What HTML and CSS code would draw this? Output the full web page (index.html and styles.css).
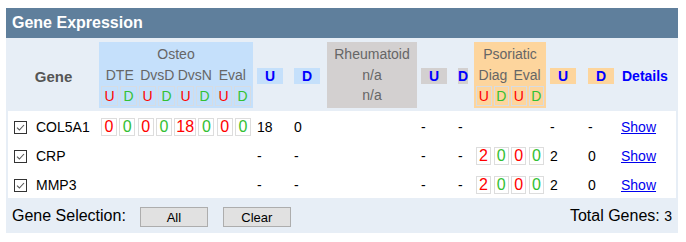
FILE: index.html
```html
<!DOCTYPE html>
<html>
<head>
<meta charset="utf-8">
<link rel="stylesheet" href="styles.css">
</head>
<body>
<div class="panel">
  <div class="title">Gene Expression</div>
  <div class="grid head">
    <div class="h-gene">Gene</div>
    <div class="grp osteo">
      <div class="grp-name">Osteo</div>
      <div class="subs four"><span>DTE</span><span>DvsD</span><span>DvsN</span><span>Eval</span></div>
      <div class="hboxes eight">
        <span class="u">U</span><span class="d">D</span><span class="u">U</span><span class="d">D</span>
        <span class="u">U</span><span class="d">D</span><span class="u">U</span><span class="d">D</span>
      </div>
    </div>
    <div class="hcell"><span class="tag blue">U</span></div>
    <div class="hcell"><span class="tag blue">D</span></div>
    <div class="grp rheum"><div>Rheumatoid</div><div>n/a</div><div>n/a</div></div>
    <div class="hcell"><span class="tag gray">U</span></div>
    <div class="hcell"><span class="tag gray tight">D</span></div>
    <div class="grp psor">
      <div class="grp-name">Psoriatic</div>
      <div class="subs two"><span>Diag</span><span>Eval</span></div>
      <div class="hboxes four">
        <span class="u">U</span><span class="d">D</span><span class="u">U</span><span class="d">D</span>
      </div>
    </div>
    <div class="hcell"><span class="tag orange">U</span></div>
    <div class="hcell"><span class="tag orange">D</span></div>
    <div class="hcell details">Details</div>
  </div>

  <div class="rows">
    <div class="grid row">
      <div class="gene"><span class="cb"><svg width="13" height="13" viewBox="0 0 13 13"><rect x="0.5" y="0.5" width="12" height="12" fill="#fff" stroke="#333"/><path d="M3 6.6 L5.4 9 L10 4" fill="none" stroke="#555" stroke-width="1.1"/></svg></span><span class="name">COL5A1</span></div>
      <div class="dboxes"><span class="u">0</span><span class="d">0</span><span class="u">0</span><span class="d">0</span><span class="u">18</span><span class="d">0</span><span class="u">0</span><span class="d">0</span></div>
      <div class="val">18</div>
      <div class="val">0</div>
      <div></div>
      <div class="val">-</div>
      <div class="val">-</div>
      <div></div>
      <div class="val">-</div>
      <div class="val">-</div>
      <div class="show"><a href="#">Show</a></div>
    </div>
    <div class="grid row">
      <div class="gene"><span class="cb"><svg width="13" height="13" viewBox="0 0 13 13"><rect x="0.5" y="0.5" width="12" height="12" fill="#fff" stroke="#333"/><path d="M3 6.6 L5.4 9 L10 4" fill="none" stroke="#555" stroke-width="1.1"/></svg></span><span class="name">CRP</span></div>
      <div></div>
      <div class="val">-</div>
      <div class="val">-</div>
      <div></div>
      <div class="val">-</div>
      <div class="val">-</div>
      <div class="dboxes small"><span class="u">2</span><span class="d">0</span><span class="u">0</span><span class="d">0</span></div>
      <div class="val">2</div>
      <div class="val">0</div>
      <div class="show"><a href="#">Show</a></div>
    </div>
    <div class="grid row">
      <div class="gene"><span class="cb"><svg width="13" height="13" viewBox="0 0 13 13"><rect x="0.5" y="0.5" width="12" height="12" fill="#fff" stroke="#333"/><path d="M3 6.6 L5.4 9 L10 4" fill="none" stroke="#555" stroke-width="1.1"/></svg></span><span class="name">MMP3</span></div>
      <div></div>
      <div class="val">-</div>
      <div class="val">-</div>
      <div></div>
      <div class="val">-</div>
      <div class="val">-</div>
      <div class="dboxes small"><span class="u">2</span><span class="d">0</span><span class="u">0</span><span class="d">0</span></div>
      <div class="val">2</div>
      <div class="val">0</div>
      <div class="show"><a href="#">Show</a></div>
    </div>
  </div>

  <div class="footer">
    <span class="sel-label">Gene Selection:</span>
    <button class="btn btn-all">All</button>
    <button class="btn btn-clear">Clear</button>
    <span class="total">Total Genes: <span class="num">3</span></span>
  </div>
</div>
</body>
</html>
```

FILE: styles.css
```css
html, body {
  margin: 0;
  padding: 0;
  background: #fff;
}
body {
  padding: 8px 0 0 6px;
  font-family: "Liberation Sans", Arial, sans-serif;
  font-size: 14px;
  color: #000;
}
.panel {
  width: 672px;
  background: #e7eef6;
}
.title {
  height: 30px;
  line-height: 30px;
  padding-left: 6px;
  background: #5f7f9c;
  color: #fff;
  font-weight: bold;
  font-size: 16px;
}
.grid {
  display: grid;
  grid-template-columns: 91px 154px 37px 37px 90px 37px 20px 72px 38px 36px 56px;
  margin: 0 2px;
}
.head {
  margin-top: 4px;
  height: 66px;
}
.h-gene {
  display: flex;
  align-items: center;
  justify-content: center;
  padding-top: 3px;
  font-weight: bold;
  font-size: 15px;
  color: #555;
}
.grp {
  color: #666;
  text-align: center;
}
.osteo { background: #c5e0fb; padding-top: 2px; }
.psor { background: #fdd59d; padding-top: 2px; }
.grp-name, .subs {
  line-height: 21px;
  height: 21px;
}
.subs {
  display: grid;
  padding: 0 2px;
}
.subs.four { grid-template-columns: repeat(4, 1fr); }
.subs.two { grid-template-columns: repeat(2, 1fr); }
.hboxes {
  display: grid;
  gap: 2px;
  padding: 0 2px;
  height: 20px;
}
.hboxes.eight { grid-template-columns: repeat(8, 1fr); }
.hboxes.four { grid-template-columns: repeat(4, 1fr); }
.hboxes span {
  border: 1px solid #d6dce3;
  line-height: 18px;
  font-size: 14px;
  text-align: center;
}
.u { color: #ff0000; }
.d { color: #33c033; }
.rheum {
  background: #d3d0d0;
  display: flex;
  flex-direction: column;
  justify-content: center;
  line-height: 20.5px;
}
.hcell {
  display: flex;
  align-items: center;
  padding-top: 2px;
}
.tag {
  margin-left: 4px;
  width: 26px;
  height: 16px;
  line-height: 16px;
  text-align: center;
  font-weight: bold;
  color: #0000ff;
}
.tag.tight { width: auto; padding: 0; }
.blue { background: #c5e0fb; }
.gray { background: #d3d0d0; }
.orange { background: #fdd59d; }
.details {
  padding-left: 2px;
  font-weight: bold;
  color: #0000ff;
}
.rows {
  margin: 3px 2px 0;
  background: #fff;
}
.rows .grid { margin: 0; }
.row {
  height: 29px;
  padding-top: 3px;
  box-sizing: border-box;
  align-items: center;
}
.gene {
  display: flex;
  align-items: center;
}
.cb {
  display: flex;
  margin-left: 6px;
  width: 13px;
  height: 13px;
}
.name { margin-left: 9px; }
.dboxes {
  display: flex;
  justify-content: space-between;
  padding: 0 2px;
}
.dboxes span {
  box-sizing: border-box;
  min-width: 16px;
  height: 18px;
  line-height: 16px;
  padding: 0 1px;
  border: 1px solid #dddddd;
  font-size: 16px;
  text-align: center;
}
.dboxes.small span { min-width: 15px; }
.val { padding-left: 4px; }
.show { padding-left: 1px; }
.show a { color: #0000ee; text-decoration: underline; }
.footer {
  display: flex;
  align-items: center;
  height: 35px;
  padding: 0 6px;
  font-size: 16px;
}
.btn {
  box-sizing: border-box;
  margin-top: 3px;
  width: 68px;
  height: 20px;
  padding: 0;
  border: 1px solid #adadad;
  background: #e1e1e1;
  font-family: "Liberation Sans", Arial, sans-serif;
  font-size: 13px;
  color: #000;
}
.btn-all { margin-left: 14px; }
.btn-clear { margin-left: 15px; }
.total { margin-left: auto; }
.total .num { font-size: 14px; }
```
